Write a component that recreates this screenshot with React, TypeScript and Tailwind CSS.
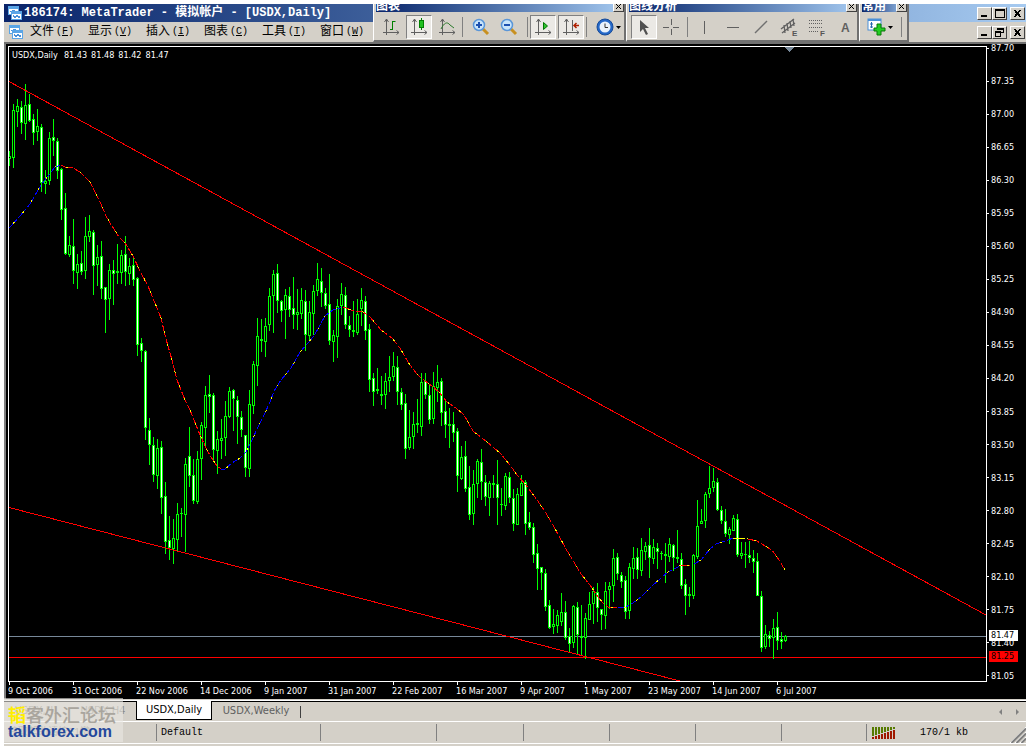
import type { ReactNode } from 'react'

// high, body top, body bottom, low, bearish
type Candle = [number, number, number, number, 0 | 1]

const CANDLES: Candle[] = [
    [151, 156, 159, 166, 0], [104, 110, 158, 168, 0], [99, 106, 112, 127, 0], [101, 107, 123, 134, 1],
    [84, 105, 124, 140, 0], [94, 104, 121, 122, 1], [114, 119, 133, 145, 1], [109, 126, 132, 141, 0],
    [124, 127, 183, 192, 1], [170, 181, 184, 194, 0], [132, 138, 181, 185, 0], [119, 137, 141, 156, 1],
    [138, 141, 171, 179, 1], [168, 169, 210, 220, 1], [193, 208, 254, 255, 1], [236, 245, 255, 257, 0],
    [219, 246, 271, 284, 1], [254, 264, 273, 289, 0], [251, 263, 272, 275, 1], [217, 236, 271, 279, 0],
    [215, 231, 237, 242, 0], [230, 232, 266, 295, 1], [245, 257, 265, 286, 0], [241, 256, 289, 299, 1],
    [287, 287, 300, 333, 1], [264, 270, 299, 320, 0], [260, 270, 274, 305, 1], [244, 271, 273, 284, 1],
    [250, 255, 273, 284, 0], [236, 254, 272, 286, 1], [258, 266, 274, 285, 0], [256, 265, 280, 286, 1],
    [277, 278, 345, 356, 1], [338, 343, 351, 362, 1], [350, 351, 428, 440, 1], [418, 430, 445, 465, 1],
    [437, 445, 475, 482, 1], [439, 448, 476, 489, 0], [441, 447, 498, 514, 1], [482, 496, 542, 554, 1],
    [516, 540, 548, 560, 1], [519, 538, 549, 564, 0], [503, 514, 540, 551, 0], [508, 513, 514, 537, 1],
    [458, 464, 515, 552, 0], [427, 456, 476, 487, 1], [459, 475, 501, 504, 1], [451, 459, 502, 504, 0],
    [422, 425, 459, 480, 0], [386, 395, 428, 448, 0], [375, 394, 397, 413, 1], [393, 395, 450, 460, 1],
    [431, 439, 451, 474, 0], [419, 438, 441, 459, 0], [401, 416, 438, 456, 0], [387, 391, 417, 418, 0],
    [389, 390, 399, 431, 1], [396, 400, 417, 444, 1], [411, 417, 430, 437, 1], [435, 435, 468, 477, 1],
    [390, 404, 469, 477, 0], [361, 364, 406, 414, 0], [318, 336, 366, 386, 0], [319, 339, 341, 352, 1],
    [318, 326, 342, 357, 0], [288, 296, 325, 331, 0], [270, 274, 296, 333, 0], [264, 273, 301, 313, 1],
    [300, 301, 311, 322, 1], [289, 295, 310, 339, 0], [287, 296, 310, 317, 1], [277, 308, 315, 329, 1],
    [289, 312, 315, 330, 0], [288, 300, 314, 319, 0], [290, 301, 335, 351, 1], [301, 312, 336, 342, 0],
    [285, 291, 314, 335, 0], [263, 279, 291, 296, 0], [268, 281, 293, 307, 1], [288, 293, 306, 309, 1],
    [274, 304, 341, 345, 1], [330, 335, 342, 362, 0], [299, 306, 337, 358, 0], [283, 294, 306, 315, 0],
    [287, 295, 325, 329, 1], [316, 325, 330, 337, 1], [301, 330, 332, 337, 1], [299, 314, 333, 335, 0],
    [288, 300, 309, 326, 0], [296, 301, 331, 340, 1], [324, 329, 380, 392, 1], [373, 378, 392, 406, 1],
    [368, 389, 391, 394, 1], [376, 394, 396, 405, 1], [373, 381, 395, 409, 0], [356, 377, 381, 392, 0],
    [352, 366, 377, 381, 0], [356, 367, 392, 405, 1], [388, 392, 405, 410, 1], [394, 403, 449, 459, 1],
    [410, 437, 448, 450, 0], [412, 424, 437, 449, 0], [399, 423, 425, 433, 1], [373, 382, 427, 436, 0],
    [373, 381, 395, 399, 1], [385, 395, 420, 424, 1], [372, 386, 419, 424, 0], [365, 382, 388, 402, 0],
    [378, 381, 413, 426, 1], [399, 411, 425, 438, 1], [408, 424, 426, 448, 1], [412, 424, 433, 442, 1],
    [428, 431, 476, 492, 1], [446, 457, 479, 480, 0], [441, 456, 489, 492, 1], [466, 487, 515, 520, 1],
    [470, 484, 514, 525, 0], [459, 461, 484, 498, 0], [449, 462, 482, 500, 1], [475, 482, 497, 506, 1],
    [481, 483, 498, 516, 0], [475, 483, 485, 498, 1], [460, 484, 498, 525, 1], [488, 504, 505, 516, 1],
    [473, 476, 506, 510, 0], [472, 477, 498, 503, 1], [489, 498, 524, 531, 1], [488, 494, 525, 525, 0],
    [475, 483, 496, 496, 0], [480, 482, 524, 535, 1], [512, 522, 528, 530, 1], [523, 527, 555, 563, 1],
    [544, 553, 569, 590, 1], [567, 567, 573, 590, 1], [569, 573, 607, 611, 1], [600, 605, 628, 629, 1],
    [609, 624, 627, 634, 0], [610, 615, 626, 633, 0], [593, 612, 622, 626, 0], [601, 612, 638, 640, 1],
    [628, 636, 644, 653, 1], [605, 606, 643, 648, 0], [602, 607, 635, 655, 1], [605, 636, 638, 655, 1],
    [613, 618, 638, 659, 0], [592, 604, 620, 620, 0], [587, 591, 604, 624, 0], [583, 592, 608, 622, 1],
    [609, 609, 615, 630, 1], [582, 591, 616, 629, 0], [582, 586, 590, 609, 0], [549, 558, 586, 602, 0],
    [553, 557, 574, 580, 1], [572, 575, 582, 588, 1], [576, 580, 612, 619, 1], [563, 567, 611, 619, 0],
    [547, 558, 569, 579, 0], [548, 557, 570, 579, 1], [538, 550, 571, 576, 0], [542, 546, 552, 560, 0],
    [528, 545, 558, 578, 1], [539, 547, 559, 564, 0], [543, 548, 552, 569, 1], [551, 553, 554, 560, 1],
    [543, 554, 556, 583, 1], [538, 544, 557, 562, 0], [544, 545, 558, 571, 1], [530, 557, 559, 563, 1],
    [553, 559, 586, 589, 1], [579, 584, 596, 615, 1], [587, 594, 596, 607, 1], [554, 555, 596, 599, 0],
    [500, 526, 557, 559, 0], [509, 521, 524, 524, 0], [492, 494, 521, 528, 0], [466, 488, 494, 498, 0],
    [468, 481, 488, 492, 0], [478, 482, 510, 511, 1], [506, 510, 521, 524, 1], [509, 521, 534, 537, 1],
    [527, 529, 535, 544, 0], [515, 518, 531, 531, 0], [514, 519, 555, 557, 1], [542, 553, 556, 559, 0],
    [542, 554, 555, 568, 1], [541, 555, 558, 563, 1], [550, 558, 562, 573, 1], [553, 561, 596, 596, 1],
    [591, 596, 648, 652, 1], [625, 634, 647, 649, 0], [631, 635, 639, 647, 1], [619, 628, 638, 659, 0],
    [612, 627, 641, 650, 1], [632, 639, 642, 649, 1], [635, 636, 641, 642, 0],
]

const AVERAGE = [
    { color: '#0000ff', points: '9,228 20,216 30,204 41,185 55,167 61,165' },
    { color: '#ff0000', points: '61,165 65,167 73,168 80,172 86,178 90,182 100,202 106,216 112,226 119,237 125,243 133,256 141,273 148,286 155,303 161,318 166,339 172,360 177,380 185,400 190,410 200,435 208,452 213,460 217,466 221,469' },
    { color: '#0000ff', points: '221,469 225,469 232,463 240,458 246,452 252,440 258,427 264,415 270,402 274,391 281,380 291,368 300,352 308,343 314,336 320,325 325,316 333,310 343,307' },
    { color: '#ff0000', points: '343,307 354,311 363,312 370,317 381,330 392,338 400,348 408,362 416,373 421,378 432,386 439,392 447,402 456,408 464,415 473,431 487,442 500,453 510,465 517,475 526,485 535,497 544,510 553,525 566,549 572,559 581,574 590,585 598,597 603,603 608,607 618,608' },
    { color: '#0000ff', points: '618,608 626,607 636,601 644,594 652,586 661,578 668,572 676,568 681,565' },
    { color: '#ff0000', points: '681,565 690,565' },
    { color: '#0000ff', points: '694,564 701,560 705,555 710,549 716,544 728,540 733,538' },
    { color: '#ffff00', points: '733,538 748,538' },
    { color: '#ff0000', points: '748,539 757,541 765,546 772,550 779,560 785,570' },
]

const PRICES = Array.from({ length: 20 }, (_, i) => (87.7 - i * 0.35).toFixed(2))
const DATES = [
    '9 Oct 2006', '31 Oct 2006', '22 Nov 2006', '14 Dec 2006', '9 Jan 2007', '31 Jan 2007', '22 Feb 2007',
    '16 Mar 2007', '9 Apr 2007', '1 May 2007', '23 May 2007', '14 Jun 2007', '6 Jul 2007',
]
const QUOTE = ['81.43', '81.48', '81.42', '81.47']
const MENU = [['文件', 'F'], ['显示', 'V'], ['插入', 'I'], ['图表', 'C'], ['工具', 'T'], ['窗口', 'W']]

const MONO = "font-['Liberation_Mono','Noto_Sans_CJK_SC',monospace]"

function AppIcon() {
    return (
        <svg width="14" height="14" viewBox="0 0 14 14" shapeRendering="crispEdges" className="shrink-0">
            <rect x="0" y="0" width="11" height="9" fill="#5aa5e6" />
            <rect x="1" y="3" width="9" height="5" fill="#fff" />
            <path d="M2 5.500h2v-1h2v1h3" stroke="#4a90d8" fill="none" />
            <rect x="3" y="5" width="11" height="9" fill="#5aa5e6" />
            <rect x="4" y="8" width="9" height="5" fill="#fff" />
            <path d="M5 9l2 3 2-3 2 3 1-2" stroke="#4a90d8" fill="none" />
        </svg>
    )
}

function WinButton({ label, children }: { label: string; children: ReactNode }) {
    return (
        <button type="button" aria-label={label}
            className="h-[13px] w-[15px] border border-t-white border-l-white border-r-[#404040] border-b-[#404040] bg-[#d4d0c8]">
            <svg width="13" height="11" viewBox="0 0 13 11" shapeRendering="crispEdges" fill="none" stroke="#000">
                {children}
            </svg>
        </button>
    )
}

const closeGlyph = <path d="M3 2l6 7M4 2l6 7M9 2l-6 7M10 2l-6 7" />
const minGlyph = <path d="M3 8h6" strokeWidth="2" />

function Tool({ label, pressed, children }: { label: string; pressed?: boolean; children: ReactNode }) {
    return (
        <button type="button" aria-label={label} aria-pressed={pressed}
            className={pressed
                ? 'flex h-6 w-[26px] shrink-0 items-center justify-center border border-t-[#808080] border-l-[#808080] border-r-white border-b-white bg-[#ebe9e5]'
                : 'flex h-6 w-[26px] shrink-0 items-center justify-center'}>
            <svg width="20" height="20" viewBox="0 0 20 20" fill="none">{children}</svg>
        </button>
    )
}

const Divider = () => <span className="h-5 w-px shrink-0 bg-[#808080]" />

const DropArrow = () => (
    <svg width="5" height="3" viewBox="0 0 5 3" className="-ml-1 shrink-0"><path d="M0 0h5L2.500 3z" fill="#000" /></svg>
)

const axes = (
    <path d="M5.500 2v16M2 15.500h16M3.500 5l2-3 2 3M15.500 13.500l2.500 2-2.500 2" stroke="#606060" />
)

function Toolbar({ title, className, children }: { title: string; className: string; children: ReactNode }) {
    return (
        <section className={`flex h-full flex-col border-r-2 border-b-2 border-l border-l-white border-r-[#707070] border-b-[#707070] bg-[#d4d0c8] ${className}`}>
            <header className="ml-0.5 flex h-2 shrink-0 items-end justify-between overflow-hidden bg-gradient-to-r from-[#0a246a] to-[#a6caf0]">
                <h2 className="font-['Noto_Sans_CJK_SC',sans-serif] text-xs leading-[14px] font-bold text-white">{title}</h2>
                <button type="button" aria-label={`${title} ×`} className="h-[11px] w-[11px] border border-t-white border-l-white border-r-[#404040] border-b-[#404040] bg-[#d4d0c8]">
                    <svg width="9" height="9" viewBox="0 0 9 9"><path d="M2 2l5 5M7 2l-5 5" stroke="#000" /></svg>
                </button>
            </header>
            <div className="flex flex-1 items-center gap-0.5 overflow-hidden pt-0.5 pl-1">{children}</div>
        </section>
    )
}

function Toolbars() {
    return (
        <div className="absolute top-0 left-[369px] flex h-[38px]">
            <Toolbar title="图表" className="w-[253px]">
                <Tool label="Bar chart">
                    {axes}
                    <path d="M11.500 4v9M11.500 4.500h3M9 12.500h3" stroke="#008000" />
                </Tool>
                <Tool label="Candlesticks" pressed>
                    {axes}
                    <path d="M12.500 1v12" stroke="#008000" />
                    <rect x="10.500" y="3.500" width="4" height="7" fill="#20c020" stroke="#008000" />
                </Tool>
                <Tool label="Line chart">
                    {axes}
                    <path d="M4 12c3-6 6-8 9-4l4 3" stroke="#2a7a2a" />
                </Tool>
                <Divider />
                <span className="w-px" />
                <Tool label="Zoom in">
                    <path d="M12 12l5 5" stroke="#c89020" strokeWidth="3" />
                    <circle cx="8" cy="8" r="5.500" fill="#c8e4fa" stroke="#5a96d8" strokeWidth="1.500" />
                    <path d="M5 8h6M8 5v6" stroke="#1c50b0" strokeWidth="2" />
                </Tool>
                <Tool label="Zoom out">
                    <path d="M12 12l5 5" stroke="#c89020" strokeWidth="3" />
                    <circle cx="8" cy="8" r="5.500" fill="#c8e4fa" stroke="#5a96d8" strokeWidth="1.500" />
                    <path d="M5 8h6" stroke="#1c50b0" strokeWidth="2" />
                </Tool>
                <span className="w-px" />
                <Divider />
                <Tool label="Auto scroll" pressed>
                    {axes}
                    <path d="M10.500 5.500v7l4-3.500z" fill="#30c030" stroke="#007800" />
                </Tool>
                <Tool label="Chart shift" pressed>
                    {axes}
                    <path d="M11.500 3v11" stroke="#606060" />
                    <path d="M18 8.500h-5M15.500 6l-2.500 2.500 2.500 2.500" stroke="#b02000" strokeWidth="1.500" />
                </Tool>
                <Divider />
                <span className="w-px" />
                <Tool label="Periods">
                    <circle cx="10" cy="10" r="8" fill="#2468c8" stroke="#164a98" />
                    <circle cx="10" cy="10" r="5.500" fill="#e8f2fc" />
                    <path d="M10 6.500v4h3" stroke="#333" />
                </Tool>
                <DropArrow />
            </Toolbar>
            <Toolbar title="图线分析" className="w-[233px]">
                <Tool label="Cursor" pressed>
                    <path d="M6 3v12l3-3 3 6 2-1-3-6h4z" fill="#505050" />
                </Tool>
                <Tool label="Crosshair">
                    <path d="M1 10.500h6M11 10.500h6M9.500 2v6M9.500 12v6" stroke="#606060" />
                </Tool>
                <Divider />
                <span className="w-1" />
                <Tool label="Vertical line"><path d="M9.500 4v13" stroke="#606060" /></Tool>
                <Tool label="Horizontal line"><path d="M4 10.500h12" stroke="#606060" /></Tool>
                <Tool label="Trendline"><path d="M4 16L16 4" stroke="#707070" strokeWidth="1.500" /></Tool>
                <Tool label="Channel">
                    <path d="M2 12L15 2M3 16L16 6M5 8l1 8M8 6l1 8M11 4l1 7M14 2l1 7" stroke="#606060" strokeWidth="1.300" />
                    <text x="13" y="19" fontSize="8" className="font-['Liberation_Sans',sans-serif]" fontWeight="700" fill="#555">E</text>
                </Tool>
                <Tool label="Fibonacci">
                    <path d="M2 3.500h14M2 6.500h14M2 10.500h14M2 14.500h9" stroke="#606060" strokeDasharray="1 1" />
                    <text x="13" y="19" fontSize="8" className="font-['Liberation_Sans',sans-serif]" fontWeight="700" fill="#555">F</text>
                </Tool>
                <Tool label="Text">
                    <text x="6" y="15" fontSize="12" className="font-['Liberation_Sans',sans-serif]" fontWeight="700" fill="#606060">A</text>
                </Tool>
            </Toolbar>
            <Toolbar title="常用" className="w-[50px]">
                <Tool label="New order">
                    <rect x="1" y="2" width="13" height="11" fill="#fff" stroke="#4a90d8" />
                    <path d="M1 3h13" stroke="#4a90d8" strokeWidth="2" />
                    <path d="M4.500 5v6M3 7h3M3 10h3" stroke="#2868b0" />
                    <path d="M10 7h4v4h4v3h-4v4h-4v-4H7v-3h3z" fill="#22cc22" stroke="#067a06" />
                </Tool>
                <DropArrow />
                <span className="w-1" />
                <Divider />
            </Toolbar>
        </div>
    )
}

function Plot() {
    return (
        <svg className="block h-full w-full" viewBox="9 47 977 634" preserveAspectRatio="none" shapeRendering="crispEdges" fill="none">
            <path d="M785 47h9l-4.500 5z" fill="#778899" />
            <rect x="9" y="636" width="977" height="1" fill="#778899" />
            <rect x="9" y="657" width="977" height="1" fill="#ff0000" />
            {CANDLES.map(([high, top, bottom, low, bear], i) => {
                const x = 9 + i * 4
                return (
                    <g key={x}>
                        <rect x={x} y={high} width="1" height={Math.max(low - high, 1)} fill="#00ff00" />
                        <rect x={x - 1} y={top} width="3" height={bottom - top} fill="#00ff00" />
                        {bottom - top > 2 && (
                            <rect x={x} y={top + 1} width="1" height={bottom - top - 2} fill={bear ? '#ffffff' : '#000000'} />
                        )}
                    </g>
                )
            })}
            {AVERAGE.map(({ color, points }) => (
                <g key={points}>
                    <polyline points={points} stroke={color} strokeDasharray="6 2 4 2" />
                    <polyline points={points} stroke="#ffff00" strokeDasharray="2 12" strokeDashoffset="8" />
                </g>
            ))}
            <path d="M9 81.500L986 615M9 507.500L680 681" stroke="#ff0000" />
        </svg>
    )
}

function PriceTag({ y, className, children }: { y: number; className: string; children: ReactNode }) {
    return (
        <span className={`absolute left-0.5 h-[11px] w-[29px] pl-0.5 leading-[11px] ${className}`}
            style={{ top: `${((y - 44) / 655) * 100}%` }}>
            {children}
        </span>
    )
}

function Chart() {
    return (
        <main className="flex min-h-0 flex-1 border-l-2 border-[#808080] bg-black pl-0.5 font-['DejaVu_Sans_Condensed',sans-serif] text-[9px] text-white">
            <div className="flex min-w-0 flex-1 flex-col pt-0.5">
                <div className="relative min-h-0 flex-1 border border-white">
                    <Plot />
                    <p className="absolute top-0.5 left-[3px] flex gap-1 leading-3">
                        <span className="pr-0.5">USDX,Daily</span>
                        {QUOTE.map(value => <span key={value}>{value}</span>)}
                    </p>
                </div>
                <ol className="flex h-[17px] overflow-hidden pl-px">
                    {DATES.map(date => (
                        <li key={date} className="w-16 shrink-0 whitespace-nowrap">
                            <span className="block h-[3px] w-px bg-white" />
                            <span className="-ml-px block leading-3">{date}</span>
                        </li>
                    ))}
                </ol>
            </div>
            <div className="relative w-[39px] shrink-0">
                <ol className="flex h-full flex-col justify-between pb-[19px]">
                    {PRICES.map(price => (
                        <li key={price} className="flex h-2 items-center gap-0.5 leading-2">
                            <span className="h-px w-0.5 bg-white" />
                            {price}
                        </li>
                    ))}
                </ol>
                <PriceTag y={630} className="bg-white text-black">81.47</PriceTag>
                <PriceTag y={651} className="bg-[#ff0000] text-black">81.25</PriceTag>
            </div>
        </main>
    )
}

function StatusPane({ className, children }: { className: string; children?: ReactNode }) {
    return <div className={`my-0.5 flex items-center border-r border-[#808080] ${className}`}>{children}</div>
}

function Watermark() {
    return (
        <div className="absolute -top-0.5 left-0 h-11 w-[119px] bg-[#e9e7e3]/60 pl-1">
            <p className="pt-1 font-['Noto_Sans_CJK_SC',sans-serif] text-lg leading-6 font-medium whitespace-nowrap text-[#a9a59d]">
                <span className="font-bold text-[#ffee00]">韬</span>客外汇论坛
            </p>
            <p className="font-['Liberation_Sans',sans-serif] text-base leading-3 font-bold text-[#24489c]">talkforex.com</p>
        </div>
    )
}

export default function App() {
    return (
        <div className="flex h-screen flex-col bg-white pt-1 pr-1.5 pl-1">
            <div className="relative shrink-0 overflow-hidden">
                <div className="flex h-[18px] items-center gap-0.5 bg-gradient-to-r from-[#0a246a] to-[#a6caf0] pr-px pl-1">
                    <AppIcon />
                    <h1 className={`flex-1 text-xs font-bold whitespace-pre text-white ${MONO}`}>186174: MetaTrader - 模拟帐户 - [USDX,Daily]</h1>
                    <div className="flex">
                        <WinButton label="最小化">{minGlyph}</WinButton>
                        <WinButton label="最大化"><path d="M2 1.500h9v8h-9zM2 2.500h9" /></WinButton>
                        <span className="w-[3px]" />
                        <WinButton label="关闭">{closeGlyph}</WinButton>
                    </div>
                </div>
                <div className="flex h-5 items-center bg-[#d4d0c8] pr-px pl-[5px]">
                    <AppIcon />
                    <nav className="flex flex-1 gap-3.5 pl-[7px]">
                        {MENU.map(([name, key]) => (
                            <button key={key} type="button" className={`flex w-11 items-center justify-between text-xs whitespace-nowrap text-black ${MONO}`}>
                                <span>{name}</span>
                                <span className="text-[10px]">(<u>{key}</u>)</span>
                            </button>
                        ))}
                    </nav>
                    <div className="flex">
                        <WinButton label="最小化">{minGlyph}</WinButton>
                        <WinButton label="还原"><path d="M4 1.500h6v4h-2M4.500 1v2M4 2.500h6M2.500 4h5v5h-5zM2 5.500h6" /></WinButton>
                        <span className="w-[3px]" />
                        <WinButton label="关闭">{closeGlyph}</WinButton>
                    </div>
                </div>
                <Toolbars />
            </div>
            <div className="h-0.5 shrink-0 bg-[#707070]" />
            <Chart />
            <footer className="relative shrink-0 border-t border-[#d4d0c8] bg-[#d4d0c8]">
                <div className="flex h-[22px] border-y border-white">
                    <div className="flex flex-1 border-t border-black font-['DejaVu_Sans_Condensed',sans-serif] text-[11px] text-[#606060]">
                        <button type="button" className="w-[66px] text-[#908c84]">USDX,H1</button>
                        <button type="button" className="w-[66px] text-[#908c84]">USDX,H4</button>
                        <button type="button" className="-mt-px h-[19px] w-[76px] border border-t-0 border-black bg-white text-black">USDX,Daily</button>
                        <button type="button" className="w-[88px]">USDX,Weekly</button>
                        <span className="mt-1 h-3 w-px bg-[#404040]" />
                        <div className="ml-auto flex items-center gap-3 pr-1.5">
                            <button type="button" aria-label="向左"><svg width="5" height="8" viewBox="0 0 5 8"><path d="M4 1v6L1 4z" fill="#808080" /></svg></button>
                            <button type="button" aria-label="向右"><svg width="5" height="8" viewBox="0 0 5 8"><path d="M1 1v6l3-3z" fill="#808080" /></svg></button>
                        </div>
                    </div>
                </div>
                <div className={`flex h-[22px] border-b border-white text-[10px] text-black ${MONO}`}>
                    <StatusPane className="w-[153px] pl-1 text-[#908c84]">获取帮助请按F1键</StatusPane>
                    <StatusPane className="flex-1 pl-1">Default</StatusPane>
                    <StatusPane className="w-[116px]" />
                    <StatusPane className="w-[87px]" />
                    <StatusPane className="w-[86px]" />
                    <StatusPane className="w-[86px]" />
                    <StatusPane className="w-[86px]" />
                    <StatusPane className="w-[85px]" />
                    <div className="flex w-[159px] items-center gap-6 pl-[5px]">
                        <svg width="24" height="12" viewBox="0 0 24 12" shapeRendering="crispEdges">
                            {[0, 1, 2, 3, 4, 5, 6, 7].map(i => (
                                <g key={i}>
                                    <rect x={i * 3} y="0" width="2" height={9 - i} fill="#567a00" />
                                    <rect x={i * 3} y={10 - i} width="2" height={2 + i} fill="#a01800" />
                                </g>
                            ))}
                        </svg>
                        <span className="whitespace-nowrap">170/1 kb</span>
                        <svg width="16" height="16" viewBox="0 0 16 16" className="ml-auto shrink-0 self-end">
                            <path d="M0 16L16 0M5 16L16 5M10 16l6-6" stroke="#fff" />
                            <path d="M1.500 16L16 1.500M6.500 16L16 6.500M11.500 16l4.500-4.500" stroke="#808080" strokeWidth="2" />
                        </svg>
                    </div>
                </div>
                <div className="h-0.5" />
                <Watermark />
            </footer>
        </div>
    )
}
